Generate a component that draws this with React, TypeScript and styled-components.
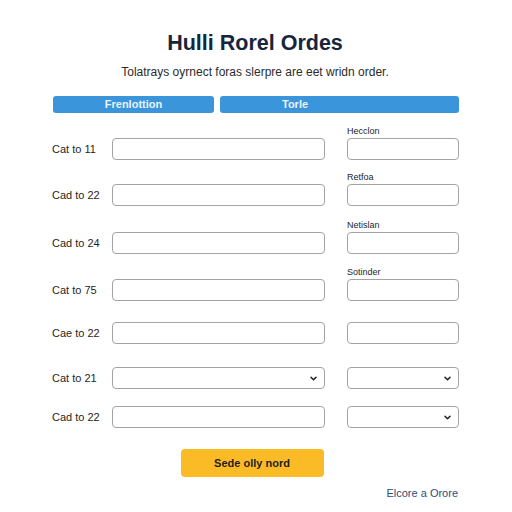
import React from "react";
import styled, { createGlobalStyle } from "styled-components";

const Global = createGlobalStyle`
  html, body { margin: 0; padding: 0; background: #ffffff; }
  body { font-family: "Liberation Sans", Arial, sans-serif; }
  * { box-sizing: border-box; }
`;

const Page = styled.div`
  width: 512px;
  height: 512px;
  display: flex;
  flex-direction: column;
  padding: 30px 53px 0 51px;
  background: #fff;
`;

const Title = styled.h1`
  margin: 0;
  font-family: "Liberation Sans", Arial, sans-serif;
  font-weight: 700;
  font-size: 21.5px;
  line-height: 26px;
  color: #16253d;
  text-align: center;
`;

const Subtitle = styled.p`
  margin: 8px 0 0;
  font-size: 12px;
  line-height: 16px;
  color: #2b2b2b;
  text-align: center;
`;

const Tabs = styled.div`
  margin-top: 16px;
  margin-left: 2px;
  display: grid;
  grid-template-columns: 161px 239px;
  column-gap: 6px;
`;

const Tab = styled.div<{ $pad?: number }>`
  height: 17px;
  border-radius: 3px;
  background: #3b95db;
  color: #eaf4fc;
  font-size: 11px;
  font-weight: 700;
  line-height: 17px;
  text-align: ${(p) => (p.$pad ? "left" : "center")};
  padding-left: ${(p) => p.$pad ?? 0}px;
`;

const Rows = styled.div`
  margin-top: 11px;
  display: flex;
  flex-direction: column;
`;

const Row = styled.div<{ $mt: number }>`
  margin-top: ${(p) => p.$mt}px;
  display: grid;
  grid-template-columns: 39px 213px 112px;
  grid-template-rows: 14px 22px;
  column-gap: 22px;
  align-items: center;
`;

const Caption = styled.span`
  grid-column: 3;
  grid-row: 1;
  font-size: 9px;
  line-height: 10px;
  color: #1e1e1e;
  align-self: start;
  padding-top: 2px;
`;

const Label = styled.span`
  grid-column: 1;
  grid-row: 2;
  font-size: 11px;
  color: #1f1f1f;
  margin-left: 1px;
  white-space: nowrap;
`;

const Field = styled.div<{ $col: number }>`
  grid-column: ${(p) => p.$col};
  grid-row: 2;
  height: 22px;
  border: 1px solid #a3a3a3;
  border-radius: 4px;
  background: #fff;
  display: flex;
  align-items: center;
  justify-content: flex-end;
  padding-right: 7px;
`;

const Chevron = () => (
  <svg width="7" height="5" viewBox="0 0 7 5">
    <path d="M1 1.2 L3.5 3.8 L6 1.2" fill="none" stroke="#222" strokeWidth="1.5" strokeLinecap="round" strokeLinejoin="round" />
  </svg>
);

const Footer = styled.div`
  display: flex;
  flex-direction: column;
  align-items: center;
`;

const Submit = styled.button`
  margin-top: 21px;
  margin-right: 6px;
  width: 143px;
  height: 28px;
  border: none;
  border-radius: 4px;
  background: #fbbb27;
  color: #1f1f1f;
  font-family: "Liberation Sans", Arial, sans-serif;
  font-size: 11px;
  font-weight: 700;
`;

const Link = styled.a`
  align-self: flex-end;
  margin-top: 9px;
  margin-right: 1px;
  font-size: 11px;
  line-height: 14px;
  color: #2b4c7e;
  text-decoration: none;
`;

type R = { label: string; cap?: string; mt: number; leftSel?: boolean; rightSel?: boolean };

const rows: R[] = [
  { label: "Cat to 11", cap: "Hecclon", mt: 0 },
  { label: "Cad to 22", cap: "Retfoa", mt: 10 },
  { label: "Cad to 24", cap: "Netislan", mt: 12 },
  { label: "Cat to 75", cap: "Sotinder", mt: 11 },
  { label: "Cae to 22", mt: 7 },
  { label: "Cat to 21", mt: 9, leftSel: true, rightSel: true },
  { label: "Cad to 22", mt: 3, rightSel: true },
];

export default function App() {
  return (
    <>
      <Global />
      <Page>
        <Title>Hulli Rorel Ordes</Title>
        <Subtitle>Tolatrays oyrnect foras slerpre are eet wridn order.</Subtitle>
        <Tabs>
          <Tab>Frenlottion</Tab>
          <Tab $pad={62}>Torle</Tab>
        </Tabs>
        <Rows>
          {rows.map((r, i) => (
            <Row key={i} $mt={r.mt}>
              {r.cap && <Caption>{r.cap}</Caption>}
              <Label>{r.label}</Label>
              <Field $col={2}>{r.leftSel && <Chevron />}</Field>
              <Field $col={3}>{r.rightSel && <Chevron />}</Field>
            </Row>
          ))}
        </Rows>
        <Footer>
          <Submit>Sede olly nord</Submit>
          <Link>Elcore a Orore</Link>
        </Footer>
      </Page>
    </>
  );
}
